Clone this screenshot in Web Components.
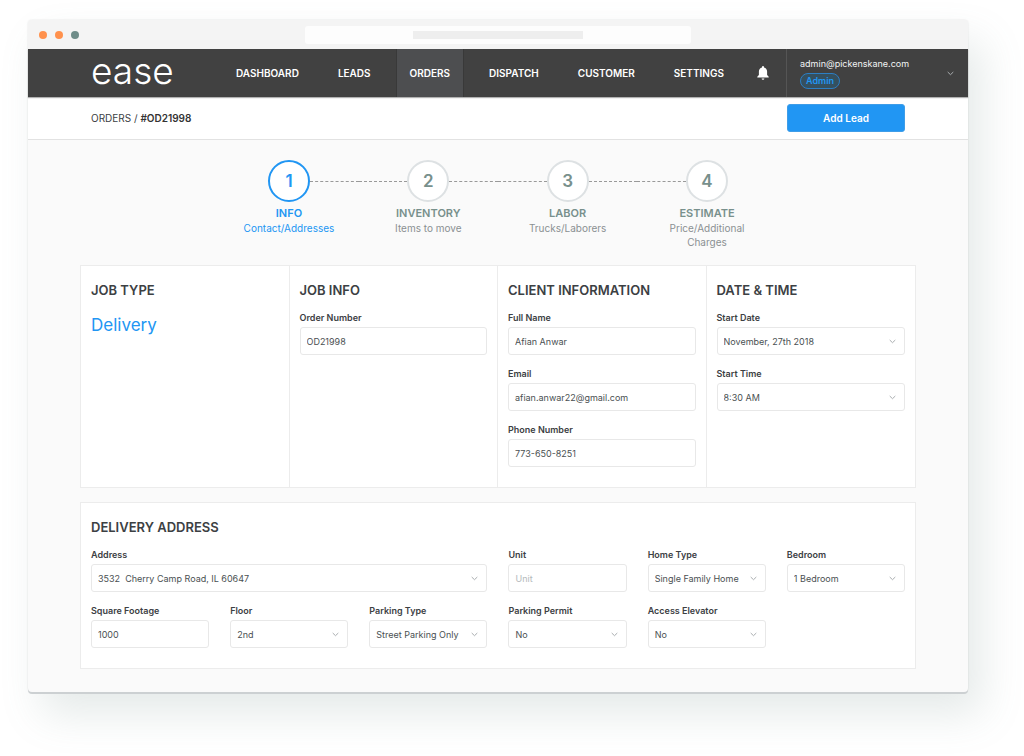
<!DOCTYPE html>
<html lang="en">
<head>
<meta charset="utf-8">
<meta name="viewport" content="width=device-width, initial-scale=1">
<title>Ease – Order #OD21998</title>
<style>
  body {
    margin: 0;
    background: #fff;
    color: #3c4043;
    font-family: Inter, "Open Sans", sans-serif;
    font-size: 9px;
    --blue: #2196f3;
    --teal: #78908c;
    --line: #ececec;
    --page: #fafafa;
    --ink: #4a5052;
  }
</style>
</head>
<body>
<order-page></order-page>

<script>
const define = (name, html, setup) => {
  const template = document.createElement('template');
  template.innerHTML = html;
  customElements.define(name, class extends HTMLElement {
    constructor() {
      super();
      this.attachShadow({ mode: 'open' }).append(template.content.cloneNode(true));
    }
    connectedCallback() {
      if (setup && !this.ready) { this.ready = true; setup(this, this.shadowRoot); }
    }
  });
};

define('browser-frame', `
  <style>
    :host {
      display: block;
      margin: 20px 56px 64px 28px;
      border-radius: 4px;
      box-shadow: 0 2px 0 #ccd0d2, 0 0 2px rgba(0,0,0,.12), 14px 22px 42px rgba(110,140,132,.18);
      background: var(--page);
    }
    .bar {
      display: grid;
      grid-template-columns: 1fr 41% 1fr;
      align-items: center;
      height: 29px;
      background: #f4f4f4;
      border-radius: 4px 4px 0 0;
    }
    .dots { display: flex; gap: 8px; padding-left: 11px; }
    .dots i { width: 8px; height: 8px; border-radius: 50%; background: #ff914d; }
    .dots i:last-child { background: #6f8d89; }
    .address { display: grid; place-items: center; height: 18px; border-radius: 3px; background: #fdfdfd; }
    .address i { width: 44%; height: 8px; background: #eee; }
  </style>
  <div class="bar">
    <div class="dots"><i></i><i></i><i></i></div>
    <div class="address"><i></i></div>
  </div>
  <slot></slot>`);

define('nav-link', `
  <style>
    :host { display: block; }
    a {
      display: flex; align-items: center; justify-content: center;
      height: 100%; box-sizing: border-box; padding: 0 13px;
      border: solid transparent; border-width: 0 1px;
      color: #fff; font-size: 10px; font-weight: 600; text-decoration: none;
    }
    :host([current]) a { background: #4d4e50; border-color: #393939; }
  </style>
  <a href="#"><slot></slot></a>`,
  (host, root) => { if (host.hasAttribute('current')) root.querySelector('a').setAttribute('aria-current', 'page'); });

define('chevron-icon', `
  <style>
    :host { display: block; width: 7px; height: 5px; color: #a9adaf; }
    svg { display: block; width: 100%; height: 100%; }
  </style>
  <svg viewBox="0 0 7 5" fill="none" stroke="currentColor" aria-hidden="true"><path d="M.7 1l2.800 2.700L6.300 1"/></svg>`);

define('site-header', `
  <style>
    :host {
      display: flex; height: 48px; padding-left: 63px;
      background: #414141; color: #fff; box-shadow: 0 1px 1px rgba(0,0,0,.3);
      position: relative;
    }
    .logo {
      display: flex; align-items: center; flex: none; width: 131px; box-sizing: border-box;
      color: #fff; font-size: 37px; font-weight: 300; line-height: 40px; text-decoration: none;
      padding-bottom: 4px;
    }
    nav { display: flex; gap: 11px; flex: 1; }
    .bell { flex: none; padding: 0; border: 0; background: none; color: #fff; display: grid; place-items: center; width: 46px; }
    .bell svg { width: 12px; height: 14px; }
    .user {
      display: flex; align-items: center; justify-content: space-between; flex: none;
      box-sizing: border-box; width: 182px; padding: 0 14px 0 13px;
      border-left: 1px solid #555;
    }
    .who { display: flex; flex-direction: column; align-items: flex-start; gap: 3px; }
    .mail { line-height: 13px; color: #f2f4f4; }
    .role {
      box-sizing: border-box; width: 40px; height: 16px; line-height: 14px; text-align: center;
      border: 1px solid #2c7fc4; border-radius: 8px; background: #35505f;
      color: var(--blue); font-weight: 600;
    }
  </style>
  <a class="logo" href="#">ease</a>
  <nav aria-label="Main">
    <nav-link>DASHBOARD</nav-link>
    <nav-link>LEADS</nav-link>
    <nav-link current>ORDERS</nav-link>
    <nav-link>DISPATCH</nav-link>
    <nav-link>CUSTOMER</nav-link>
    <nav-link>SETTINGS</nav-link>
  </nav>
  <button class="bell" type="button" aria-label="Notifications">
    <svg viewBox="0 0 12 14" fill="currentColor"><path d="M6 0a1 1 0 0 0-1 1v.5C3 2 1.900 3.600 1.900 5.600V9L.3 10.700v.8h11.400v-.8L10.100 9V5.600C10.100 3.600 9 2 7 1.500V1a1 1 0 0 0-1-1zM4.600 12.400a1.400 1.400 0 0 0 2.800 0z"/></svg>
  </button>
  <div class="user">
    <div class="who"><span class="mail">admin@pickenskane.com</span><span class="role">Admin</span></div>
    <chevron-icon></chevron-icon>
  </div>`);

define('crumb-bar', `
  <style>
    :host {
      display: flex; align-items: center; justify-content: space-between;
      height: 42px; padding: 0 63px; background: #fff; border-bottom: 1px solid #e2e2e2;
      font-size: 10px;
    }
    a { color: inherit; text-decoration: none; }
    b { font-weight: 600; color: #333; }
    button {
      width: 118px; height: 28px; padding: 0; border: 1px solid #3f9de8; border-radius: 3px;
      background: var(--blue); color: #fff; font: 600 10px/26px Inter, "Open Sans", sans-serif;
    }
  </style>
  <nav aria-label="Breadcrumb"><a href="#">ORDERS</a> / <b>#OD21998</b></nav>
  <button type="button">Add Lead</button>`);

define('progress-step', `
  <style>
    :host { display: block; text-align: center; color: var(--teal); }
    .track { display: flex; align-items: center; margin-bottom: 4px; }
    .track::before, .track::after { content: ""; flex: 1; border-top: 1px dashed #999; }
    :host([first]) .track::before, :host([last]) .track::after { visibility: hidden; }
    .dot {
      box-sizing: border-box; width: 42px; height: 42px; border: 2px solid #dde1e3; border-radius: 50%;
      background: #fff; font-size: 17px; font-weight: 600; line-height: 38px;
    }
    .name { font-size: 11px; font-weight: 600; line-height: 15px; }
    .note { padding: 0 24px; font-size: 10px; line-height: 14px; color: #8a9092; }
    :host([active]), :host([active]) .note { color: var(--blue); }
    :host([active]) .dot { border-color: var(--blue); }
  </style>
  <div class="track"><span class="dot"></span></div>
  <div class="name"></div>
  <div class="note"><slot></slot></div>`,
  (host, root) => {
    root.querySelector('.dot').textContent = host.getAttribute('number');
    root.querySelector('.name').textContent = host.getAttribute('name');
  });

define('progress-steps', `
  <style>
    :host { display: grid; grid-template-columns: repeat(4, 1fr); width: 66.67%; margin: 0 auto; padding: 20px 0 16px; }
  </style>
  <slot></slot>`);

define('form-field', `
  <style>
    :host { display: block; min-width: 0; }
    label { display: block; margin-bottom: 3px; font-weight: 600; line-height: 12px; }
    .box { display: grid; align-items: center; }
    .box > * { grid-area: 1 / 1; }
    input, select {
      appearance: none; box-sizing: border-box; width: 100%; height: 28px; margin: 0; padding: 0 6px;
      border: 1px solid #e8e8e8; border-radius: 3px; background: #fff;
      color: var(--ink); font: 9px Inter, "Open Sans", sans-serif;
    }
    input::placeholder { color: #b4b9bb; opacity: 1; }
    chevron-icon { justify-self: end; margin-right: 9px; pointer-events: none; }
  </style>
  <label for="control"></label>
  <div class="box"></div>`,
  (host, root) => {
    root.querySelector('label').textContent = host.getAttribute('label');
    const value = host.getAttribute('value') || '';
    const box = root.querySelector('.box');
    const isSelect = host.hasAttribute('select');
    const control = document.createElement(isSelect ? 'select' : 'input');
    control.id = 'control';
    if (isSelect) {
      control.add(new Option(value, value, true, true));
      box.append(control, document.createElement('chevron-icon'));
    } else {
      control.type = host.getAttribute('type') || 'text';
      control.value = value;
      control.placeholder = host.getAttribute('placeholder') || '';
      box.append(control);
    }
  });

define('form-section', `
  <style>
    :host { display: block; padding: 14px 10px 20px; min-width: 0; }
    h2 { margin: 0 0 12px; font-size: 13px; font-weight: 600; line-height: 20px; }
    .fields { display: grid; gap: 13px 21px; }
    :host([wide]) .fields { grid-template-columns: repeat(6, minmax(0, 1fr)); }
    ::slotted([span="3"]) { grid-column: span 3; }
  </style>
  <h2></h2>
  <div class="fields"><slot></slot></div>`,
  (host, root) => { root.querySelector('h2').textContent = host.getAttribute('heading'); });

define('form-card', `
  <style>
    :host { display: grid; margin-bottom: 14px; background: #fff; border: 1px solid var(--line); }
    :host([columns]) { grid-template-columns: repeat(4, minmax(0, 1fr)); }
    :host(:last-child) { margin-bottom: 0; }
    ::slotted(:not(:last-child)) { border-right: 1px solid var(--line); }
  </style>
  <slot></slot>`);

define('job-type', `
  <style>
    :host { display: block; padding-top: 2px; color: var(--blue); font-size: 17px; font-weight: 400; line-height: 22px; }
  </style>
  <slot></slot>`);

define('order-page', `
  <style>
    :host { display: flow-root; }
    main { padding: 0 52px 23px; }
  </style>
  <browser-frame>
    <site-header></site-header>
    <crumb-bar></crumb-bar>
    <main>
      <progress-steps>
        <progress-step first active number="1" name="INFO">Contact/Addresses</progress-step>
        <progress-step number="2" name="INVENTORY">Items to move</progress-step>
        <progress-step number="3" name="LABOR">Trucks/Laborers</progress-step>
        <progress-step last number="4" name="ESTIMATE">Price/Additional Charges</progress-step>
      </progress-steps>
      <form-card columns>
        <form-section heading="JOB TYPE"><job-type>Delivery</job-type></form-section>
        <form-section heading="JOB INFO">
          <form-field label="Order Number" value="OD21998"></form-field>
        </form-section>
        <form-section heading="CLIENT INFORMATION">
          <form-field label="Full Name" value="Afian Anwar"></form-field>
          <form-field label="Email" type="email" value="afian.anwar22@gmail.com"></form-field>
          <form-field label="Phone Number" type="tel" value="773-650-8251"></form-field>
        </form-section>
        <form-section heading="DATE &amp; TIME">
          <form-field select label="Start Date" value="November, 27th 2018"></form-field>
          <form-field select label="Start Time" value="8:30 AM"></form-field>
        </form-section>
      </form-card>
      <form-card>
        <form-section wide heading="DELIVERY ADDRESS">
          <form-field select span="3" label="Address" value="3532&nbsp; Cherry Camp Road, IL 60647"></form-field>
          <form-field label="Unit" placeholder="Unit"></form-field>
          <form-field select label="Home Type" value="Single Family Home"></form-field>
          <form-field select label="Bedroom" value="1 Bedroom"></form-field>
          <form-field label="Square Footage" value="1000"></form-field>
          <form-field select label="Floor" value="2nd"></form-field>
          <form-field select label="Parking Type" value="Street Parking Only"></form-field>
          <form-field select label="Parking Permit" value="No"></form-field>
          <form-field select label="Access Elevator" value="No"></form-field>
        </form-section>
      </form-card>
    </main>
  </browser-frame>`);
</script>
</body>
</html>
